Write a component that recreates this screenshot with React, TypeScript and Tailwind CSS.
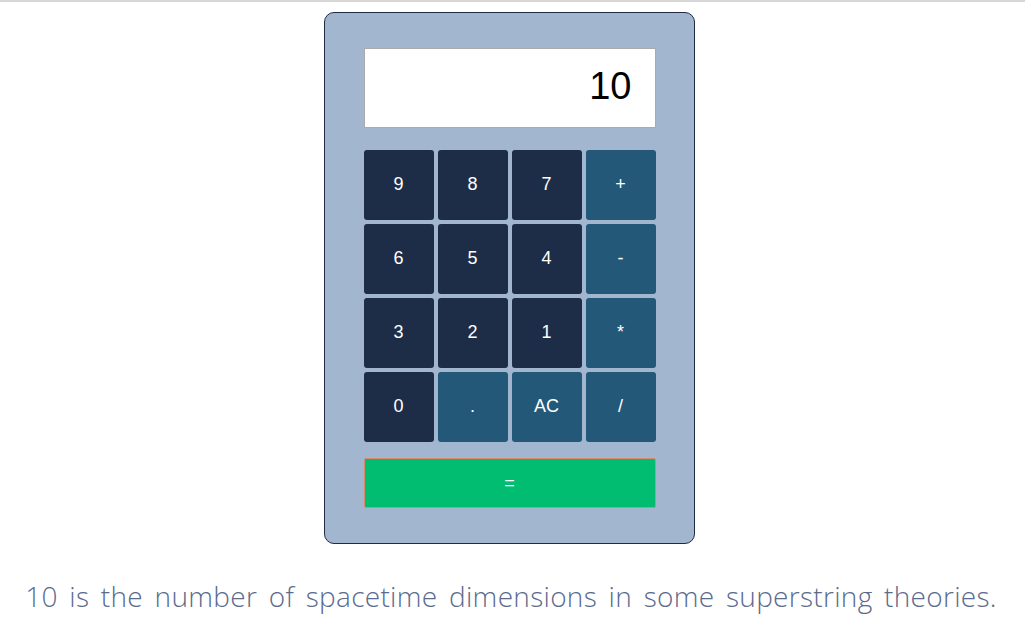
import React from "react";

const rows: { label: string; kind: "num" | "op" }[][] = [
  [
    { label: "9", kind: "num" },
    { label: "8", kind: "num" },
    { label: "7", kind: "num" },
    { label: "+", kind: "op" },
  ],
  [
    { label: "6", kind: "num" },
    { label: "5", kind: "num" },
    { label: "4", kind: "num" },
    { label: "-", kind: "op" },
  ],
  [
    { label: "3", kind: "num" },
    { label: "2", kind: "num" },
    { label: "1", kind: "num" },
    { label: "*", kind: "op" },
  ],
  [
    { label: "0", kind: "num" },
    { label: ".", kind: "op" },
    { label: "AC", kind: "op" },
    { label: "/", kind: "op" },
  ],
];

export default function App() {
  return (
    <div className="min-h-[624px] bg-white border-t-2 border-[#d6d6d6] flex flex-col items-center" style={{ fontFamily: '"Liberation Sans", Arial, sans-serif' }}>
      <div className="mt-[10px] mr-[7px] w-[371px] h-[532px] bg-[#a2b6cf] border border-[#1e2d45] rounded-[10px] pt-[35px] px-[39px] flex flex-col">
        <div className="h-[80px] w-[292px] bg-white border border-[#aaaaaa] flex items-center justify-end pr-[23px] pb-[4px] text-[38px] text-black">
          10
        </div>
        <div className="mt-[22px] grid grid-cols-[70px_70px_70px_70px] gap-[4px]">
          {rows.flat().map((b, i) => (
            <div
              key={i}
              className={`h-[70px] pb-[2px] rounded-[3px] flex items-center justify-center text-white text-[18px] ${
                b.kind === "num" ? "bg-[#1e2d47]" : "bg-[#245879]"
              }`}
            >
              {b.label}
            </div>
          ))}
        </div>
        <div className="mt-[16px] h-[50px] w-[292px] bg-[#00bd71] border border-[#d98a6a] rounded-[2px] flex items-center justify-center text-white text-[18px]">
          =
        </div>
      </div>
      <p
        className="mt-[31px] mr-[3px] text-[28px] font-light text-[#5a6b8e] tracking-[0.3px] [word-spacing:4px]"
        style={{ fontFamily: '"Open Sans", sans-serif' }}
      >
        10 is the number of spacetime dimensions in some superstring theories.
      </p>
    </div>
  );
}
